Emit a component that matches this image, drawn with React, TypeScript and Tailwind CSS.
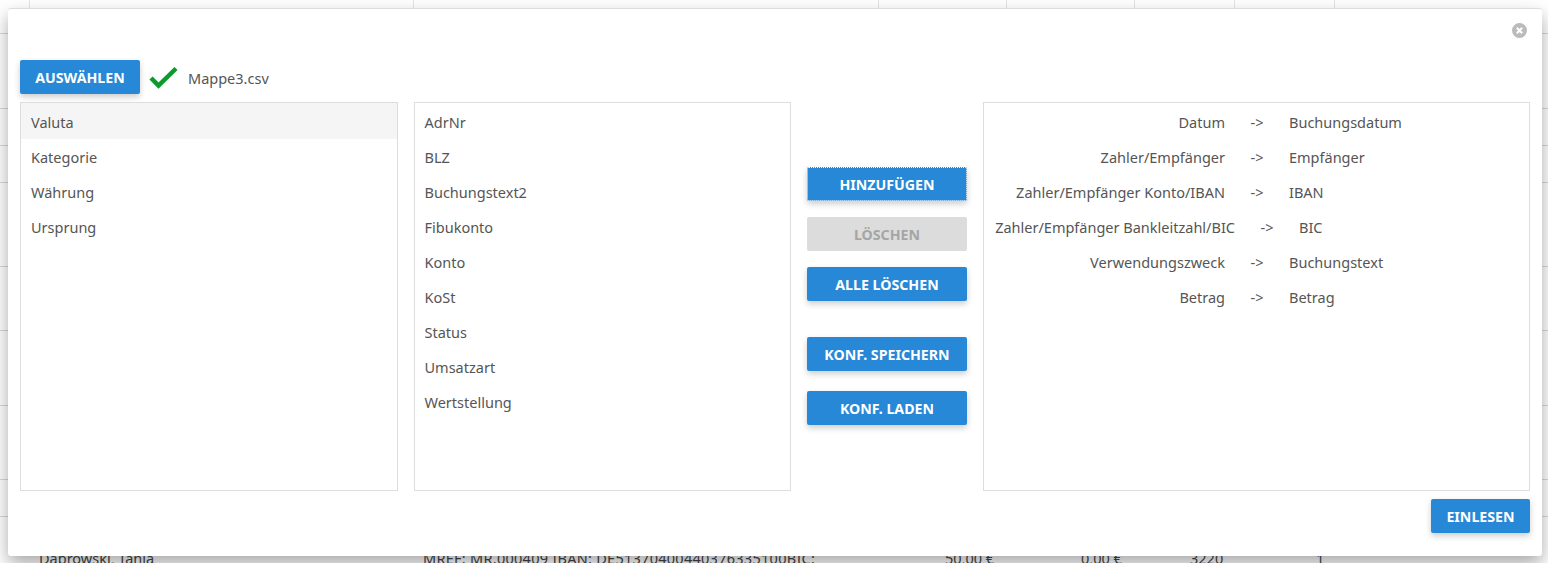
const list1 = ["Valuta", "Kategorie", "Währung", "Ursprung"];
const list2 = ["AdrNr", "BLZ", "Buchungstext2", "Fibukonto", "Konto", "KoSt", "Status", "Umsatzart", "Wertstellung"];
const maps: [string, string, string][] = [
  ["Datum", "Buchungsdatum", "w-[241px]"],
  ["Zahler/Empfänger", "Empfänger", "w-[241px]"],
  ["Zahler/Empfänger Konto/IBAN", "IBAN", "w-[241px]"],
  ["Zahler/Empfänger Bankleitzahl/BIC", "BIC", "w-[251px]"],
  ["Verwendungszweck", "Buchungstext", "w-[241px]"],
  ["Betrag", "Betrag", "w-[241px]"],
];
const rowHeights = ["h-[34px]", "h-[75px]", "h-[37px]", "h-[37px]", "h-[84px]", "h-[64px]", "h-[75px]", "h-[74px]", "h-[37px]"];

function Cells() {
  return (
    <>
      <div className="h-full w-[30px] border-r border-[#e4e4e4]" />
      <div className="h-full w-[384px] border-r border-[#e4e4e4]" />
      <div className="h-full w-[465px] border-r border-[#e4e4e4]" />
      <div className="h-full w-[128px] border-r border-[#e4e4e4]" />
      <div className="h-full w-[128px] border-r border-[#e4e4e4]" />
      <div className="h-full w-[100px] border-r border-[#e4e4e4]" />
      <div className="h-full w-[100px] border-r border-[#e4e4e4]" />
    </>
  );
}

function Btn({ label, className = "" }: { label: string; className?: string }) {
  return (
    <button className={"h-[34px] rounded-[2px] bg-[#2688d6] pt-[2px] text-[14.2px] font-bold uppercase text-white shadow-[0_3px_6px_rgba(0,0,0,0.2)] " + className}>
      {label}
    </button>
  );
}

export default function App() {
  return (
    <div className="relative h-[563px] w-[1548px] overflow-hidden bg-white font-['Noto_Sans',sans-serif] text-[14.5px] text-[#555]">
      {rowHeights.map((h, i) => (
        <div key={i} className={"flex border-b border-[#d8d8d8] " + h}>
          <Cells />
        </div>
      ))}
      <div className="flex pt-[31px] text-[#444]">
        <span className="ml-[39px] w-[384px]">Dabrowski, Tanja</span>
        <span className="w-[522px] tracking-[0.27px]">MREF: MR.000409 IBAN: DE51370400440376335100BIC:</span>
        <span className="w-[136px]">50,00 €</span>
        <span className="w-[109px]">0,00 €</span>
        <span className="w-[126px]">3220</span>
        <span>1</span>
      </div>

      <div className="absolute left-[8px] top-[8px] flex h-[548px] w-[1534px] flex-col rounded-[3px] border-t border-[#ddd] bg-white px-3 shadow-[0_8px_18px_rgba(0,0,0,0.34)]">
        <div className="flex h-[51px] justify-end pt-[14px]">
          <svg width="15" height="15" viewBox="0 0 14 14" className="mr-[3px]">
            <circle cx="7" cy="7" r="7" fill="#bbb" />
            <path d="M4.500 4.500l5 5M9.500 4.500l-5 5" stroke="#fff" strokeWidth="2" />
          </svg>
        </div>
        <div className="flex h-[42px] items-start">
          <Btn label="Auswählen" className="w-[120px]" />
          <svg width="30" height="24" viewBox="0 0 30 24" className="ml-[9px] mt-[5px]">
            <path d="M2 13l7.500 7.500L27 3.500" fill="none" stroke="#0b9a2c" strokeWidth="4.500" />
          </svg>
          <span className="ml-[9px] mt-[8px]">Mappe3.csv</span>
        </div>
        <div className="flex h-[389px]">
          <div className="w-[378px] border border-[#ddd]">
            {list1.map((t, i) => (
              <div key={t} className={i === 0 ? "flex h-[36px] items-center bg-[#f5f5f5] pl-[10px] pt-[3px]" : "flex h-[35px] items-center pl-[10px] pt-[2px]"}>{t}</div>
            ))}
          </div>
          <div className="ml-[16px] w-[377px] border border-[#ddd]">
            {list2.map((t, i) => (
              <div key={t} className={i === 0 ? "flex h-[36px] items-center pl-[9.500px] pt-[3px]" : "flex h-[35px] items-center pl-[9.500px] pt-[2px]"}>{t}</div>
            ))}
          </div>
          <div className="ml-[16px] flex w-[160px] flex-col pt-[65px]">
            <Btn label="Hinzufügen" className="outline-1 -outline-offset-1 outline-white outline-dotted" />
            <button className="mt-[16px] h-[34px] rounded-[2px] bg-[#dcdcdc] pt-[2px] text-[14.2px] font-bold uppercase text-[#a5a5a5]">Löschen</button>
            <Btn label="Alle löschen" className="mt-[16px]" />
            <Btn label="Konf. speichern" className="mt-[36px]" />
            <Btn label="Konf. laden" className="mt-[20px]" />
          </div>
          <div className="ml-[16px] w-[547px] border border-[#ddd]">
            {maps.map(([a, b, w], i) => (
              <div key={a} className={i === 0 ? "flex h-[36px] items-center pt-[3px]" : "flex h-[35px] items-center pt-[2px]"}>
                <span className={"text-right " + w}>{a}</span>
                <span className="w-[64px] text-center">-&gt;</span>
                <span>{b}</span>
              </div>
            ))}
          </div>
        </div>
        <div className="flex justify-end pt-[8px]">
          <Btn label="Einlesen" className="w-[99px]" />
        </div>
      </div>
    </div>
  );
}
